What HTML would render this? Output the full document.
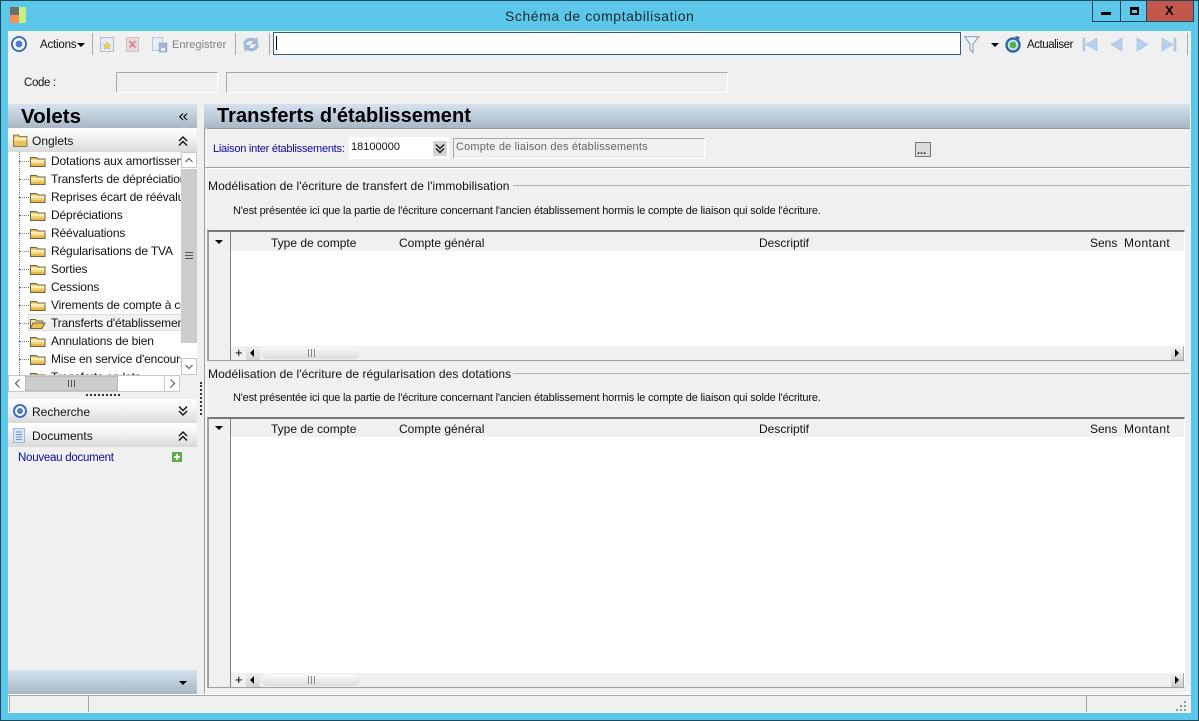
<!DOCTYPE html>
<html><head><meta charset="utf-8">
<style>
html,body{margin:0;padding:0;width:1199px;height:721px;overflow:hidden;background:#5cc7e8}
body{position:relative;font-family:"Liberation Sans",sans-serif;font-size:12px;color:#111}
.a{position:absolute}
.t{position:absolute;white-space:nowrap;line-height:14px}
.sec{background:linear-gradient(#ffffff,#f4f4f4 40%,#d9d9d9)}
.blue{background:linear-gradient(#d6e2ee,#a9b7c5)}
.tree{position:absolute;left:8px;top:152px;width:173px;height:223px;background:#fff;overflow:hidden}
.tree .t{left:43px;letter-spacing:-.14px}
.tree svg{position:absolute;left:21px}
.dot{position:absolute;left:11px;width:10px;border-top:1px dotted #777}
svg{position:absolute;overflow:visible}
</style></head><body>
<!-- window frame -->
<div class="a" style="left:0;top:0;width:1197px;height:719px;border:1px solid #1d4a5c"></div>
<!-- title -->
<div class="a" style="left:10px;top:7px;width:9px;height:8px;background:#6e6e6e"></div>
<div class="a" style="left:10px;top:15px;width:9px;height:8px;background:#f59058"></div>
<div class="a" style="left:19px;top:7px;width:7px;height:16px;background:#c6ee86"></div>
<div class="t" style="left:505px;top:8px;font-size:14px;line-height:16px;color:#1a2a30;letter-spacing:.55px">Schéma de comptabilisation</div>
<!-- window buttons -->
<div class="a" style="left:1092px;top:1px;width:100px;height:20px;border:1px solid #1d4a5c;border-top:0;background:#5cc7e8"></div>
<div class="a" style="left:1120px;top:1px;width:1px;height:20px;background:#1d4a5c"></div>
<div class="a" style="left:1146px;top:1px;width:46px;height:20px;background:#c4574c;border-left:1px solid #1d4a5c"></div>
<div class="a" style="left:1101px;top:12px;width:10px;height:3px;background:#000"></div>
<div class="a" style="left:1130px;top:7px;width:5px;height:3px;border:2px solid #000;border-top-width:3px"></div>
<div class="t" style="left:1165px;top:4px;font-size:13px;font-weight:bold;color:#000">X</div>
<!-- client -->
<div class="a" style="left:8px;top:31px;width:1183px;height:682px;background:#f0f0f0"></div>
<!-- toolbar -->
<svg style="left:10px;top:33px" width="18" height="20"><circle cx="9" cy="11" r="7" fill="#fff" stroke="#3d6fb8" stroke-width="2"/><circle cx="9" cy="11" r="3.500" fill="#4c7fc8"/></svg>
<div class="t" style="left:40px;top:38px;font-size:11.500px;letter-spacing:-.2px">Actions</div>
<div class="a" style="left:77px;top:43px;border:4px solid transparent;border-top:4px solid #000"></div>
<div class="a" style="left:92px;top:33px;width:1px;height:22px;background:#aaa"></div>
<svg style="left:100px;top:37px" width="15" height="17"><rect x=".5" y=".5" width="13" height="14" fill="#e4ecf6" stroke="#b4bece"/><path d="M7 5l1.200 2.500 2.600.3-1.900 1.800.5 2.600L7 10.900l-2.400 1.300.5-2.600-1.900-1.800 2.600-.3z" fill="#f3d24c" stroke="#c8a530" stroke-width=".5"/></svg>
<svg style="left:126px;top:37px" width="14" height="15"><rect x=".5" y=".5" width="12" height="14" fill="#ead9dc" stroke="#cfc4c8"/><path d="M3.500 4l6 6.500M9.500 4l-6 6.500" stroke="#d88a8a" stroke-width="2"/></svg>
<svg style="left:152px;top:37px" width="16" height="16"><rect x=".5" y=".5" width="10" height="13" fill="#e8eef6" stroke="#bcc8d8"/><rect x="7" y="6" width="8" height="9" fill="#a9b4d2" stroke="#8f9cbc" stroke-width=".5"/><rect x="9" y="11" width="4" height="3" fill="#e8eef6"/></svg>
<div class="t" style="left:172px;top:38px;font-size:11px;color:#808080;letter-spacing:.05px">Enregistrer</div>
<div class="a" style="left:235px;top:33px;width:1px;height:22px;background:#aaa"></div>
<svg style="left:242px;top:36px" width="18" height="18"><path d="M1 8c1-5 7-8 12-5l2-2 1.500 7.500-8-.5 2.500-2.500c-3-1.500-6 0-7 3z" fill="#9fb8d6"/><path d="M17 9c-1 5-7 8-12 5l-2 2-1.500-7.500 8 .5-2.500 2.500c3 1.500 6 0 7-3z" fill="#9fb8d6"/></svg>
<div class="a" style="left:269px;top:33px;width:1px;height:22px;background:#aaa"></div>
<div class="a" style="left:273px;top:32px;width:686px;height:21px;background:#fff;border:1px solid #2f5f86"></div>
<div class="a" style="left:276px;top:36px;width:1px;height:14px;background:#000"></div>
<svg style="left:964px;top:36px" width="16" height="18"><path d="M.7.700h14L9 8v8.500L6 14V8z" fill="#f4f7fa" stroke="#8fa3b5" stroke-width="1.200"/></svg>
<div class="a" style="left:991px;top:43px;border:4px solid transparent;border-top:4px solid #000"></div>
<svg style="left:1004px;top:36px" width="18" height="17"><circle cx="9" cy="9" r="6.500" fill="#dbe8f4" stroke="#3068a8" stroke-width="2.400"/><circle cx="9" cy="9" r="3.500" fill="#4cb648"/><path d="M11 0l5 1-2 4z" fill="#3068a8"/></svg>
<div class="t" style="left:1027px;top:38px;font-size:11.500px;letter-spacing:-.45px">Actualiser</div>
<svg style="left:1082px;top:37px" width="110" height="15" fill="#b4d0ee" stroke="#a4c0dc" stroke-width=".6">
<rect x="1" y="1" width="2" height="13"/><path d="M15 1v13L4 7.500z"/>
<path d="M40 1v13L29 7.500z"/>
<path d="M55 1v13l11-6.500z"/>
<path d="M80 1v13l11-6.500z"/><rect x="92" y="1" width="2" height="13"/></svg>
<div class="a" style="left:1187px;top:33px;width:1px;height:22px;background:#aaa"></div>
<!-- code row -->
<div class="t" style="left:24px;top:76px;font-size:11.500px;letter-spacing:-.35px">Code :</div>
<div class="a" style="left:116px;top:72px;width:100px;height:19px;border:1px solid #a8a8a8;border-right-color:#fff;border-bottom-color:#fff"></div>
<div class="a" style="left:226px;top:72px;width:500px;height:19px;border:1px solid #a8a8a8;border-right-color:#fff;border-bottom-color:#fff"></div>
<!-- Volets -->
<div class="a blue" style="left:8px;top:104px;width:189px;height:24px"></div>
<div class="t" style="left:21px;top:105px;font-size:20.500px;line-height:23px;font-weight:bold;color:#000">Volets</div>
<svg style="left:179px;top:113px" width="9" height="8" fill="none" stroke="#111" stroke-width="1.200"><path d="M4 .5L.8 3.800 4 7M8 .5L4.800 3.800 8 7"/></svg>
<div class="a sec" style="left:8px;top:128px;width:189px;height:24px"></div>
<svg style="left:13px;top:134px" width="15" height="13"><path d="M.5 2.500V1h5l1 1.500h7.500v10H.5z" fill="#eec25e" stroke="#6e6440" stroke-width=".8"/><rect x="1.500" y="3.500" width="12" height="3" fill="#fbeeb4"/></svg>
<div class="t" style="left:32px;top:134px">Onglets</div>
<svg style="left:178px;top:136px" width="10" height="10" fill="none" stroke="#111" stroke-width="1.400"><path d="M1 5l4-4 4 4M1 9.500l4-4 4 4"/></svg>
<!-- tree -->
<div class="tree">
<div class="a" style="left:11px;top:0;height:223px;border-left:1px dotted #777"></div>
<div class="dot" style="top:9px"></div><svg style="top:3px" width="18" height="13"><use href="#fd"/></svg><div class="t" style="top:2px">Dotations aux amortissements</div>
<div class="dot" style="top:27px"></div><svg style="top:21px" width="18" height="13"><use href="#fd"/></svg><div class="t" style="top:20px">Transferts de dépréciations</div>
<div class="dot" style="top:45px"></div><svg style="top:39px" width="18" height="13"><use href="#fd"/></svg><div class="t" style="top:38px">Reprises écart de réévaluation</div>
<div class="dot" style="top:63px"></div><svg style="top:57px" width="18" height="13"><use href="#fd"/></svg><div class="t" style="top:56px">Dépréciations</div>
<div class="dot" style="top:81px"></div><svg style="top:75px" width="18" height="13"><use href="#fd"/></svg><div class="t" style="top:74px">Réévaluations</div>
<div class="dot" style="top:99px"></div><svg style="top:93px" width="18" height="13"><use href="#fd"/></svg><div class="t" style="top:92px">Régularisations de TVA</div>
<div class="dot" style="top:117px"></div><svg style="top:111px" width="18" height="13"><use href="#fd"/></svg><div class="t" style="top:110px">Sorties</div>
<div class="dot" style="top:135px"></div><svg style="top:129px" width="18" height="13"><use href="#fd"/></svg><div class="t" style="top:128px">Cessions</div>
<div class="dot" style="top:153px"></div><svg style="top:147px" width="18" height="13"><use href="#fd"/></svg><div class="t" style="top:146px">Virements de compte à compte</div>
<div class="a" style="left:20px;top:162px;width:153px;height:17px;background:#f1f1f1;border:1px solid #dcdcdc;border-right:0;box-sizing:border-box"></div>
<div class="dot" style="top:171px"></div><svg style="top:165px" width="18" height="13"><path d="M1.500 11.500V2.500h5l1 1.500h6V6" fill="#f6e6a8" stroke="#6e6440"/><path d="M1.500 11.500L4 6h12l-3 5.500z" fill="#efc04e" stroke="#6e6440"/></svg><div class="t" style="top:164px">Transferts d'établissement</div>
<div class="dot" style="top:189px"></div><svg style="top:183px" width="18" height="13"><use href="#fd"/></svg><div class="t" style="top:182px">Annulations de bien</div>
<div class="dot" style="top:207px"></div><svg style="top:201px" width="18" height="13"><use href="#fd"/></svg><div class="t" style="top:200px">Mise en service d'encours</div>
<div class="dot" style="top:225px"></div><svg style="top:219px" width="18" height="13"><use href="#fd"/></svg><div class="t" style="top:218px">Transferts en lots</div>
</div>
<svg width="0" height="0" style="left:0;top:0"><defs><g id="fd"><path d="M1.500 11.500V2.500h6l1 1.500h7.500v7.500z" fill="#eab84a" stroke="#6e6440"/><rect x="2" y="4.500" width="13.500" height="2.500" fill="#fdf0b4"/><rect x="2" y="7" width="13.500" height="2" fill="#f5d680"/></g></defs></svg>
<!-- v scrollbar -->
<div class="a" style="left:181px;top:152px;width:16px;height:223px;background:#fff"></div>
<div class="a" style="left:181px;top:152px;width:16px;height:16px;background:#fff;border:1px solid #c8c8c8;box-sizing:border-box"></div>
<svg style="left:185px;top:157px" width="9" height="6" fill="none" stroke="#555" stroke-width="1.100"><path d="M.5 5L4 1.500 7.500 5"/></svg>
<div class="a" style="left:181px;top:169px;width:16px;height:174px;background:#cdcdcd"></div>
<div class="a" style="left:185px;top:252px;width:8px;height:7px;border-top:1px solid #555;border-bottom:1px solid #555;box-sizing:border-box"></div>
<div class="a" style="left:185px;top:255px;width:8px;height:1px;background:#555"></div>
<div class="a" style="left:181px;top:358px;width:16px;height:17px;background:#fff;border:1px solid #c8c8c8;box-sizing:border-box"></div>
<svg style="left:185px;top:364px" width="9" height="6" fill="none" stroke="#555" stroke-width="1.100"><path d="M.5 1L4 4.500 7.500 1"/></svg>
<!-- h scrollbar -->
<div class="a" style="left:8px;top:375px;width:172px;height:17px;background:#fff;border:1px solid #c8c8c8;box-sizing:border-box"></div>
<div class="a" style="left:25px;top:376px;width:93px;height:15px;background:#cdcdcd;border:1px solid #bbb;box-sizing:border-box"></div>
<div class="a" style="left:68px;top:380px;width:7px;height:7px;border-left:1px solid #555;border-right:1px solid #555;box-sizing:border-box"></div>
<div class="a" style="left:71px;top:380px;width:1px;height:7px;background:#555"></div>
<div class="a" style="left:164px;top:375px;width:1px;height:17px;background:#c8c8c8"></div>
<svg style="left:14px;top:379px" width="7" height="9" fill="none" stroke="#555" stroke-width="1.100"><path d="M5.500.5L1.500 4.500l4 4"/></svg>
<svg style="left:169px;top:379px" width="7" height="9" fill="none" stroke="#555" stroke-width="1.100"><path d="M1.500.5L5.500 4.500l-4 4"/></svg>
<!-- splitters -->
<div class="a" style="left:86px;top:394px;width:34px;height:2px;border-top:2px dotted #333;box-sizing:border-box"></div>
<div class="a" style="left:200px;top:382px;width:2px;height:33px;border-left:2px dotted #333;box-sizing:border-box"></div>
<!-- Recherche/Documents -->
<div class="a sec" style="left:8px;top:399px;width:189px;height:24px"></div>
<svg style="left:12px;top:402px" width="16" height="18"><circle cx="8" cy="9" r="6" fill="#fff" stroke="#3d6fb8" stroke-width="2"/><circle cx="8" cy="9" r="3" fill="#4c7fc8"/></svg>
<div class="t" style="left:32px;top:405px">Recherche</div>
<svg style="left:178px;top:406px" width="10" height="10" fill="none" stroke="#111" stroke-width="1.400"><path d="M1 .5l4 4 4-4M1 5l4 4 4-4"/></svg>
<div class="a sec" style="left:8px;top:423px;width:189px;height:24px"></div>
<svg style="left:13px;top:428px" width="13" height="16"><rect x=".5" y=".5" width="11" height="14" fill="#dce7f6" stroke="#a4b8d4"/><path d="M3 4h6M3 6.500h6M3 9h6M3 11.500h6" stroke="#6f8fc4"/></svg>
<div class="t" style="left:32px;top:429px">Documents</div>
<svg style="left:178px;top:431px" width="10" height="10" fill="none" stroke="#111" stroke-width="1.400"><path d="M1 5l4-4 4 4M1 9.500l4-4 4 4"/></svg>
<div class="t" style="left:18px;top:451px;font-size:11.500px;color:#0a0a9a;letter-spacing:-.25px">Nouveau document</div>
<div class="a" style="left:172px;top:452px;width:10px;height:10px;background:#5cae4c"></div>
<div class="a" style="left:174px;top:456px;width:6px;height:2px;background:#fff"></div>
<div class="a" style="left:176px;top:454px;width:2px;height:6px;background:#fff"></div>
<!-- bottom of left panel -->
<div class="a blue" style="left:8px;top:670px;width:189px;height:24px"></div>
<div class="a" style="left:179px;top:681px;border:4px solid transparent;border-top:4px solid #000"></div>
<!-- right panel -->
<div class="a blue" style="left:204px;top:104px;width:986px;height:24px"></div>
<div class="a" style="left:204px;top:128px;width:986px;height:1px;background:#999"></div>
<div class="t" style="left:217px;top:105px;font-size:20px;line-height:23px;font-weight:bold;color:#000;letter-spacing:.05px">Transferts d'établissement</div>
<div class="a" style="left:204px;top:128px;width:1px;height:566px;background:#a0a0a0"></div>
<div class="a" style="left:206px;top:128px;width:1px;height:566px;background:#fff"></div>
<div class="t" style="left:213px;top:142px;font-size:11px;color:#0a0a9a;letter-spacing:-.25px">Liaison inter établissements:</div>
<div class="a" style="left:349px;top:137px;width:100px;height:22px;background:#fff"></div>
<div class="t" style="left:351px;top:140px;font-size:11px">18100000</div>
<div class="a" style="left:433px;top:141px;width:14px;height:15px;background:#d4d4d4;border-radius:2px"></div>
<svg style="left:435px;top:144px" width="10" height="10" fill="none" stroke="#222" stroke-width="1.500"><path d="M1 .5l4 4 4-4M1 4.500l4 4 4-4"/></svg>
<div class="a" style="left:453px;top:138px;width:252px;height:21px;border:1px solid #a8a8a8;border-right-color:#fff;border-bottom-color:#fff;box-sizing:border-box"></div>
<div class="t" style="left:456px;top:140px;font-size:11px;color:#666;letter-spacing:.18px">Compte de liaison des établissements</div>
<div class="a" style="left:915px;top:142px;width:14px;height:13px;background:#dcdcdc;border:1px solid #777"></div>
<div class="t" style="left:917px;top:144px;font-size:11px;font-weight:bold;letter-spacing:0;color:#222">...</div>
<div class="a" style="left:205px;top:167px;width:985px;height:1px;background:#a0a0a0"></div>
<div class="a" style="left:205px;top:168px;width:985px;height:1px;background:#fff"></div>
<!-- group 1 -->
<div class="t" style="left:208px;top:179px;font-size:12px;letter-spacing:.07px">Modélisation de l'écriture de transfert de l'immobilisation</div>
<div class="a" style="left:513px;top:185px;width:677px;height:1px;background:#b0b0b0"></div>
<div class="t" style="left:233px;top:204px;font-size:11px;letter-spacing:-.19px">N'est présentée ici que la partie de l'écriture concernant l'ancien établissement hormis le compte de liaison qui solde l'écriture.</div>
<div class="a" style="left:207px;top:230px;width:978px;height:131px;border:1px solid #fff;border-top:2px solid #777;border-left:2px solid #a0a0a0;border-bottom:1px solid #a0a0a0;box-sizing:border-box"></div>
<div class="a" style="left:230px;top:232px;width:1px;height:128px;background:#808080"></div>
<div class="a" style="left:231px;top:251px;width:953px;height:95px;background:#fff"></div>
<div class="a" style="left:215px;top:240px;border:4px solid transparent;border-top:4px solid #000"></div>
<div class="t" style="left:271px;top:236px">Type de compte</div>
<div class="t" style="left:399px;top:236px">Compte général</div>
<div class="t" style="left:759px;top:236px">Descriptif</div>
<div class="t" style="left:1090px;top:236px">Sens</div>
<div class="t" style="left:1124px;top:236px;letter-spacing:.4px">Montant</div>
<div class="t" style="left:235px;top:346px;font-size:13px;color:#000">+</div>
<div class="a" style="left:246px;top:346px;width:14px;height:14px;background:linear-gradient(#f0f0f0,#d4d4d4)"></div>
<div class="a" style="left:250px;top:349px;border:4px solid transparent;border-right:4px solid #000;border-left:0"></div>
<div class="a" style="left:261px;top:347px;width:99px;height:12px;border-radius:6px;background:linear-gradient(#fafafa,#dcdcdc)"></div>
<div class="a" style="left:308px;top:349px;width:7px;height:8px;border-left:1px solid #888;border-right:1px solid #888;box-sizing:border-box"></div>
<div class="a" style="left:311px;top:349px;width:1px;height:8px;background:#888"></div>
<div class="a" style="left:1171px;top:346px;width:13px;height:14px;background:linear-gradient(#f4f4f4,#ccc);border-right:1px solid #aaa;box-sizing:border-box"></div>
<div class="a" style="left:1175px;top:349px;border:4px solid transparent;border-left:4px solid #000;border-right:0"></div>
<!-- group 2 -->
<div class="t" style="left:208px;top:367px;font-size:12px;letter-spacing:.07px">Modélisation de l'écriture de régularisation des dotations</div>
<div class="a" style="left:513px;top:373px;width:677px;height:1px;background:#b0b0b0"></div>
<div class="t" style="left:233px;top:391px;font-size:11px;letter-spacing:-.19px">N'est présentée ici que la partie de l'écriture concernant l'ancien établissement hormis le compte de liaison qui solde l'écriture.</div>
<div class="a" style="left:207px;top:417px;width:978px;height:271px;border:1px solid #fff;border-top:2px solid #777;border-left:2px solid #a0a0a0;border-bottom:1px solid #a0a0a0;box-sizing:border-box"></div>
<div class="a" style="left:230px;top:419px;width:1px;height:268px;background:#808080"></div>
<div class="a" style="left:231px;top:437px;width:953px;height:236px;background:#fff"></div>
<div class="a" style="left:215px;top:426px;border:4px solid transparent;border-top:4px solid #000"></div>
<div class="t" style="left:271px;top:422px">Type de compte</div>
<div class="t" style="left:399px;top:422px">Compte général</div>
<div class="t" style="left:759px;top:422px">Descriptif</div>
<div class="t" style="left:1090px;top:422px">Sens</div>
<div class="t" style="left:1124px;top:422px;letter-spacing:.4px">Montant</div>
<div class="t" style="left:235px;top:673px;font-size:13px;color:#000">+</div>
<div class="a" style="left:246px;top:673px;width:14px;height:14px;background:linear-gradient(#f0f0f0,#d4d4d4)"></div>
<div class="a" style="left:250px;top:676px;border:4px solid transparent;border-right:4px solid #000;border-left:0"></div>
<div class="a" style="left:261px;top:674px;width:99px;height:12px;border-radius:6px;background:linear-gradient(#fafafa,#dcdcdc)"></div>
<div class="a" style="left:308px;top:676px;width:7px;height:8px;border-left:1px solid #888;border-right:1px solid #888;box-sizing:border-box"></div>
<div class="a" style="left:311px;top:676px;width:1px;height:8px;background:#888"></div>
<div class="a" style="left:1171px;top:673px;width:13px;height:14px;background:linear-gradient(#f4f4f4,#ccc);border-right:1px solid #aaa;box-sizing:border-box"></div>
<div class="a" style="left:1175px;top:676px;border:4px solid transparent;border-left:4px solid #000;border-right:0"></div>
<div class="a" style="left:205px;top:692px;width:985px;height:1px;background:#fff"></div>
<!-- status -->
<div class="a" style="left:8px;top:694px;width:1183px;height:1px;background:#fff"></div>
<div class="a" style="left:8px;top:695px;width:1183px;height:1px;background:#a8a8a8"></div>
<div class="a" style="left:9px;top:696px;width:1px;height:16px;background:#a8a8a8"></div>
<div class="a" style="left:88px;top:696px;width:1px;height:16px;background:#a8a8a8"></div>
<div class="a" style="left:1086px;top:696px;width:1px;height:16px;background:#a8a8a8"></div>
<svg style="left:1176px;top:701px" width="11" height="11" fill="#999"><rect x="8" y="0" width="2" height="2"/><rect x="4" y="4" width="2" height="2"/><rect x="8" y="4" width="2" height="2"/><rect x="0" y="8" width="2" height="2"/><rect x="4" y="8" width="2" height="2"/><rect x="8" y="8" width="2" height="2"/></svg>
</body></html>
